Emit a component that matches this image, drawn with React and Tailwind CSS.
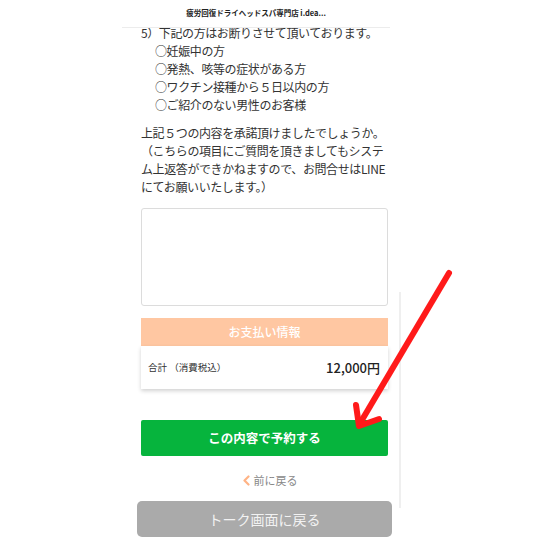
import React from "react";

const notes = [
  "○妊娠中の方",
  "○発熱、咳等の症状がある方",
  "○ワクチン接種から５日以内の方",
  "○ご紹介のない男性のお客様",
];

const confirmLines = [
  "上記５つの内容を承諾頂けましたでしょうか。",
  "（こちらの項目にご質問を頂きましてもシステ",
  "ム上返答ができかねますので、お問合せはLINE",
  "にてお願いいたします。）",
];

export default function App() {
  return (
    <div
      className="relative w-[540px] h-[540px] overflow-hidden bg-white text-[#333]"
      style={{ fontFamily: '"Noto Sans CJK JP", "Noto Sans", sans-serif' }}
    >
      {/* header */}
      <div className="relative z-10 ml-[122px] w-[268px] h-[28px] bg-white border-b border-[#ececec] flex items-center justify-center">
        <span className="text-[7.5px] font-bold text-[#222] -mt-[2px]">疲労回復ドライヘッドスパ専門店 i.dea...</span>
      </div>

      <div className="ml-[141px] w-[247px] -mt-[4px]">
        <div className="text-[12px] leading-[18px] tracking-[-0.4px] whitespace-nowrap">
          <p>5）下記の方はお断りさせて頂いております。</p>
          {notes.map((n) => (
            <p key={n} className="pl-[14px]">
              {n}
            </p>
          ))}
        </div>

        <div className="mt-[10px] text-[12px] leading-[18px] tracking-[-0.4px] whitespace-nowrap">
          {confirmLines.map((l) => (
            <p key={l}>{l}</p>
          ))}
        </div>

        <textarea className="mt-[12px] block w-full h-[98px] border border-[#dcdcdc] rounded-[3px] resize-none outline-none" />

        {/* payment */}
        <div className="mt-[12px]">
          <div className="h-[28px] bg-[#ffc7a2] flex items-center justify-center text-white text-[12px] font-medium">
            お支払い情報
          </div>
          <div className="h-[43px] bg-white shadow-[0_2px_4px_rgba(0,0,0,0.18)] flex items-center justify-between pl-[7px] pr-[8px]">
            <span className="text-[9.5px] text-[#333]">合計 （消費税込）</span>
            <span className="text-[13px] font-medium text-[#222]">12,000円</span>
          </div>
        </div>

        <button className="mt-[31px] w-full h-[36px] bg-[#06b43d] rounded-[2px] text-white text-[12.5px] font-bold flex items-center justify-center">
          この内容で予約する
        </button>

        <div className="mt-[15px] h-[18px] flex items-center justify-center gap-[3px] pl-[10px]">
          <svg width="9" height="11" viewBox="0 0 9 11">
            <path d="M6.5 1.5 L2.5 5.5 L6.5 9.5" fill="none" stroke="#ffb385" strokeWidth="2.2" strokeLinecap="round" strokeLinejoin="round" />
          </svg>
          <span className="text-[11px] text-[#888]">前に戻る</span>
        </div>

        <button className="mt-[12px] -ml-[4px] w-[255px] h-[36px] bg-[#aaaaaa] rounded-[5px] text-[#f2f2f2] text-[14px] flex items-center justify-center">
          トーク画面に戻る
        </button>
      </div>

      {/* scroll track */}
      <div className="absolute left-[399px] top-[292px] w-[2px] h-[216px] bg-[#efefef]" />

      {/* red arrow annotation */}
      <svg className="absolute left-0 top-0" width="540" height="540" viewBox="0 0 540 540">
        <g fill="none" stroke="#ff1a1a" strokeWidth="6" strokeLinecap="round" strokeLinejoin="round">
          <path d="M449 273 L359 425" />
          <path d="M356 405 L359 426 L379 419" />
        </g>
      </svg>
    </div>
  );
}
